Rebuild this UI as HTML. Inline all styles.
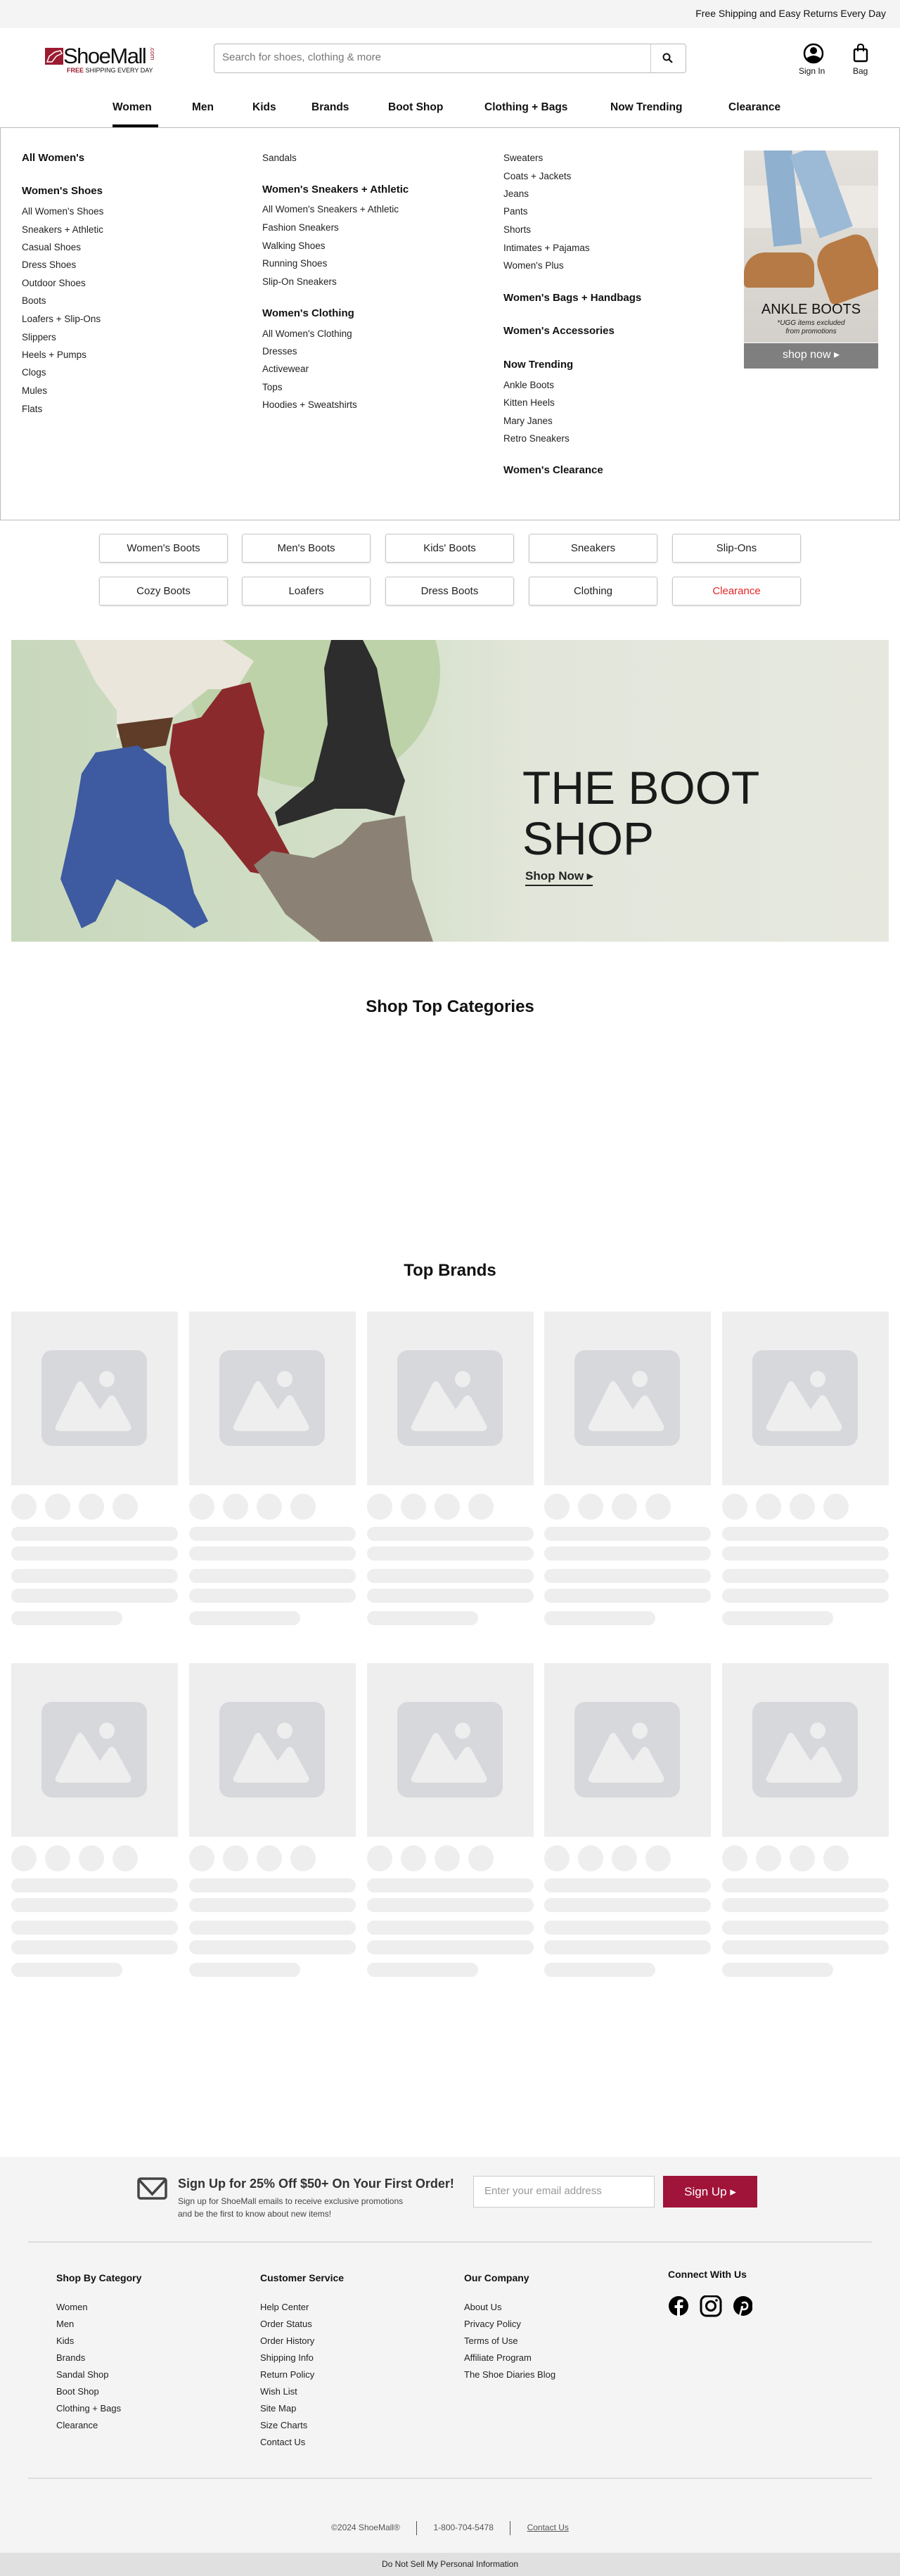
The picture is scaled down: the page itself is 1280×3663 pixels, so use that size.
<!DOCTYPE html>
<html><head><meta charset="utf-8">
<style>
*{margin:0;padding:0;box-sizing:border-box}
body{width:1280px;height:3663px;position:relative;background:#fff;font-family:"Liberation Sans",sans-serif;color:#111;overflow:hidden}
.a{position:absolute}
.mi{position:absolute;font-size:13.5px;color:#222;white-space:nowrap}
.mh{position:absolute;font-size:15px;font-weight:bold;color:#111;white-space:nowrap}
.nav{position:absolute;top:144px;font-size:15.5px;font-weight:bold;color:#111}
.btn{position:absolute;width:183px;height:41px;border:1px solid #c8c8c8;border-radius:3px;box-shadow:0 1px 2px rgba(0,0,0,.15);text-align:center;line-height:39px;font-size:15px;color:#222}
.card{position:absolute;width:237px}
.ci{height:247px;background:#eee;position:relative}
.ci svg{position:absolute;left:43px;top:55px}
.dots{position:absolute;top:259px;left:0}
.dots i{position:absolute;width:36px;height:37px;border-radius:50%;background:#eee}
.bar{position:absolute;left:0;height:20px;border-radius:10px;background:#eee}
.fh{position:absolute;font-size:14px;font-weight:bold;top:3231px;color:#111}
.fl{position:absolute;font-size:13px;color:#222;line-height:24px}
</style></head><body>

<div class="a" style="left:0;top:0;width:1280px;height:40px;background:#f4f4f4"></div>
<div class="a" style="right:20px;top:11px;font-size:14px;color:#111">Free Shipping and Easy Returns Every Day</div>

<div class="a" style="left:64px;top:68px;width:26px;height:24px;background:#9b1b30"></div>
<svg class="a" style="left:64px;top:68px" width="26" height="24" viewBox="0 0 26 24"><path d="M3 20 L6 12 L14 6 L22 4 L24 8 L16 12 L10 20 Z" fill="none" stroke="#fff" stroke-width="1.5"/></svg>
<div class="a" style="left:90px;top:62px;font-size:31px;letter-spacing:-1.5px;color:#111">ShoeMall</div>
<div class="a" style="left:212px;top:66px;font-size:9px;color:#9b1b30;writing-mode:vertical-rl">.com</div>
<div class="a" style="left:95px;top:95px;font-size:9px;color:#111;white-space:nowrap"><span style="color:#9b1b30;font-weight:bold">FREE</span> SHIPPING EVERY DAY</div>

<div class="a" style="left:304px;top:62px;width:672px;height:42px;border:1px solid #bbb;border-radius:4px"></div>
<div class="a" style="left:925px;top:63px;width:1px;height:40px;background:#ccc"></div>
<div class="a" style="left:316px;top:73px;font-size:15px;color:#777">Search for shoes, clothing &amp; more</div>
<svg class="a" style="left:941px;top:74px" width="18" height="18" viewBox="0 0 18 18"><circle cx="7" cy="7" r="4.5" fill="none" stroke="#111" stroke-width="2"/><path d="M10.5 10.5 L15 15" stroke="#111" stroke-width="2.2"/></svg>

<svg class="a" style="left:1142px;top:61px" width="30" height="30" viewBox="0 0 30 30"><circle cx="15" cy="15" r="13" fill="none" stroke="#000" stroke-width="2.5"/><circle cx="15" cy="11" r="5" fill="#000"/><path d="M5 22 Q15 14 25 22 Q20 28 15 28 Q10 28 5 22Z" fill="#000"/></svg>
<div class="a" style="left:1136px;top:94px;font-size:12px">Sign In</div>
<svg class="a" style="left:1212px;top:61px" width="24" height="28" viewBox="0 0 24 28"><rect x="3" y="9" width="18" height="17" rx="2" fill="none" stroke="#000" stroke-width="2.4"/><path d="M8 12 V6 Q8 2 12 2 Q16 2 16 6 V12" fill="none" stroke="#000" stroke-width="2"/></svg>
<div class="a" style="left:1213px;top:94px;font-size:12px">Bag</div>

<div class="nav" style="left:160px">Women</div>
<div class="nav" style="left:273px">Men</div>
<div class="nav" style="left:359px">Kids</div>
<div class="nav" style="left:443px">Brands</div>
<div class="nav" style="left:552px">Boot Shop</div>
<div class="nav" style="left:689px">Clothing + Bags</div>
<div class="nav" style="left:868px">Now Trending</div>
<div class="nav" style="left:1036px">Clearance</div>
<div class="a" style="left:160px;top:177px;width:65px;height:4px;background:#000"></div>

<div class="a" style="left:0;top:181px;width:1280px;height:559px;border:1px solid #bbb"></div>
<div class="mh" style="left:31px;top:216px">All Women's</div>
<div class="mh" style="left:31px;top:263px">Women's Shoes</div>
<div class="mi" style="left:31px;top:293px">All Women's Shoes</div>
<div class="mi" style="left:31px;top:319px">Sneakers + Athletic</div>
<div class="mi" style="left:31px;top:344px">Casual Shoes</div>
<div class="mi" style="left:31px;top:369px">Dress Shoes</div>
<div class="mi" style="left:31px;top:395px">Outdoor Shoes</div>
<div class="mi" style="left:31px;top:420px">Boots</div>
<div class="mi" style="left:31px;top:446px">Loafers + Slip-Ons</div>
<div class="mi" style="left:31px;top:472px">Slippers</div>
<div class="mi" style="left:31px;top:497px">Heels + Pumps</div>
<div class="mi" style="left:31px;top:522px">Clogs</div>
<div class="mi" style="left:31px;top:548px">Mules</div>
<div class="mi" style="left:31px;top:574px">Flats</div>

<div class="mi" style="left:373px;top:217px">Sandals</div>
<div class="mh" style="left:373px;top:261px">Women's Sneakers + Athletic</div>
<div class="mi" style="left:373px;top:290px">All Women's Sneakers + Athletic</div>
<div class="mi" style="left:373px;top:316px">Fashion Sneakers</div>
<div class="mi" style="left:373px;top:342px">Walking Shoes</div>
<div class="mi" style="left:373px;top:367px">Running Shoes</div>
<div class="mi" style="left:373px;top:393px">Slip-On Sneakers</div>
<div class="mh" style="left:373px;top:437px">Women's Clothing</div>
<div class="mi" style="left:373px;top:467px">All Women's Clothing</div>
<div class="mi" style="left:373px;top:492px">Dresses</div>
<div class="mi" style="left:373px;top:517px">Activewear</div>
<div class="mi" style="left:373px;top:543px">Tops</div>
<div class="mi" style="left:373px;top:568px">Hoodies + Sweatshirts</div>

<div class="mi" style="left:716px;top:217px">Sweaters</div>
<div class="mi" style="left:716px;top:243px">Coats + Jackets</div>
<div class="mi" style="left:716px;top:268px">Jeans</div>
<div class="mi" style="left:716px;top:293px">Pants</div>
<div class="mi" style="left:716px;top:319px">Shorts</div>
<div class="mi" style="left:716px;top:345px">Intimates + Pajamas</div>
<div class="mi" style="left:716px;top:370px">Women's Plus</div>
<div class="mh" style="left:716px;top:415px">Women's Bags + Handbags</div>
<div class="mh" style="left:716px;top:462px">Women's Accessories</div>
<div class="mh" style="left:716px;top:510px">Now Trending</div>
<div class="mi" style="left:716px;top:540px">Ankle Boots</div>
<div class="mi" style="left:716px;top:565px">Kitten Heels</div>
<div class="mi" style="left:716px;top:591px">Mary Janes</div>
<div class="mi" style="left:716px;top:616px">Retro Sneakers</div>
<div class="mh" style="left:716px;top:660px">Women's Clearance</div>

<div class="a" style="left:1058px;top:214px;width:191px;height:273px;background:linear-gradient(180deg,#e4e1dd 0%,#dcd8d2 55%,#d3d0cb 100%);overflow:hidden">
 <div class="a" style="left:0;top:50px;width:191px;height:60px;background:#ece9e5"></div>
 <div class="a" style="left:35px;top:-5px;width:40px;height:140px;background:#8fb0cf;transform:rotate(-6deg)"></div>
 <div class="a" style="left:85px;top:-5px;width:50px;height:125px;background:#9cbad6;transform:rotate(-20deg)"></div>
 <div class="a" style="left:0;top:145px;width:100px;height:50px;background:#b57a45;border-radius:30px 20px 6px 6px"></div>
 <div class="a" style="left:108px;top:125px;width:80px;height:85px;background:#b87a44;border-radius:30px 20px 8px 8px;transform:rotate(-20deg)"></div>
</div>
<div class="a" style="left:1058px;top:429px;width:191px;text-align:center;font-size:20px;color:#111">ANKLE BOOTS</div>
<div class="a" style="left:1058px;top:454px;width:191px;text-align:center;font-size:10px;font-style:italic;color:#222;line-height:12px">*UGG items excluded<br>from promotions</div>
<div class="a" style="left:1058px;top:488px;width:191px;height:36px;background:#7f7f7f;color:#fff;text-align:center;font-size:16px;line-height:34px">shop now ▸</div>

<div class="btn" style="left:141px;top:759px">Women's Boots</div>
<div class="btn" style="left:344px;top:759px">Men's Boots</div>
<div class="btn" style="left:548px;top:759px">Kids' Boots</div>
<div class="btn" style="left:752px;top:759px">Sneakers</div>
<div class="btn" style="left:956px;top:759px">Slip-Ons</div>
<div class="btn" style="left:141px;top:820px">Cozy Boots</div>
<div class="btn" style="left:344px;top:820px">Loafers</div>
<div class="btn" style="left:548px;top:820px">Dress Boots</div>
<div class="btn" style="left:752px;top:820px">Clothing</div>
<div class="btn" style="left:956px;top:820px;color:#e3262b">Clearance</div>

<div class="a" style="left:16px;top:910px;width:1248px;height:429px;background:linear-gradient(90deg,#c8d8bc 0%,#d3dfc8 40%,#e2e6da 60%,#e6e8df 100%);overflow:hidden">
 <div class="a" style="left:250px;top:-120px;width:360px;height:330px;border-radius:50%;background:#bdd2a8"></div>
 <svg class="a" style="left:0;top:0" width="620" height="429" viewBox="0 0 620 429">
  <path d="M90 0 L300 0 L345 30 L320 70 L280 70 L230 110 L150 140 L150 100 L120 60 Z" fill="#ebe6dc"/>
  <path d="M150 120 L230 110 L220 150 L160 160Z" fill="#5e3c28"/>
  <path d="M300 70 L340 60 L360 130 L350 220 L410 330 L395 340 L340 330 L300 280 L240 220 L225 160 L230 120 L270 110 Z" fill="#8b2a2c"/>
  <path d="M455 0 L500 0 L520 40 L540 150 L560 200 L545 250 L505 240 L460 240 L380 265 L375 245 L430 200 L450 120 L445 40 Z" fill="#2d2d2d"/>
  <path d="M120 160 L180 150 L220 180 L225 260 L245 300 L260 360 L280 400 L260 410 L220 380 L150 340 L120 400 L100 410 L70 340 L90 250 L100 190Z" fill="#3e5aa0"/>
  <path d="M500 260 L560 250 L570 340 L600 429 L440 429 L390 390 L345 320 L370 300 L430 310 L470 290 Z" fill="#8b8275"/>
 </svg>
 <div class="a" style="left:727px;top:174px;font-size:66px;line-height:72px;color:#1a1a1a;letter-spacing:0">THE BOOT<br>SHOP</div>
 <div class="a" style="left:731px;top:326px;font-size:17px;font-weight:bold;color:#222;border-bottom:2px solid #222;padding-bottom:2px">Shop Now ▸</div>
</div>

<div class="a" style="left:0;top:1418px;width:1280px;text-align:center;font-size:24px;font-weight:bold">Shop Top Categories</div>
<div class="a" style="left:0;top:1793px;width:1280px;text-align:center;font-size:24px;font-weight:bold">Top Brands</div>

<div id="cards"></div>

<div class="a" style="left:0;top:3067px;width:1280px;height:563px;background:#f4f4f4"></div>
<svg class="a" style="left:195px;top:3096px" width="43" height="32" viewBox="0 0 43 32"><rect x="2" y="2" width="39" height="28" rx="3" fill="none" stroke="#444" stroke-width="3.5"/><path d="M3 4 L21.5 24 L40 4" fill="none" stroke="#444" stroke-width="3.5"/></svg>
<div class="a" style="left:253px;top:3095px;font-size:18px;font-weight:bold;color:#333">Sign Up for 25% Off $50+ On Your First Order!</div>
<div class="a" style="left:253px;top:3121px;font-size:12px;color:#444;line-height:18px">Sign up for ShoeMall emails to receive exclusive promotions<br>and be the first to know about new items!</div>
<div class="a" style="left:673px;top:3094px;width:258px;height:45px;background:#fff;border:1px solid #ccc;font-size:15px;color:#999;padding:12px 15px">Enter your email address</div>
<div class="a" style="left:943px;top:3094px;width:134px;height:45px;background:#a0143a;color:#fff;font-size:17px;text-align:center;line-height:45px">Sign Up ▸</div>
<div class="a" style="left:40px;top:3187px;width:1200px;height:2px;background:#ddd"></div>

<div class="fh" style="left:80px">Shop By Category</div>
<div class="fh" style="left:370px">Customer Service</div>
<div class="fh" style="left:660px">Our Company</div>
<div class="fh" style="left:950px;top:3226px">Connect With Us</div>
<div class="fl" style="left:80px;top:3269px">Women<br>Men<br>Kids<br>Brands<br>Sandal Shop<br>Boot Shop<br>Clothing + Bags<br>Clearance</div>
<div class="fl" style="left:370px;top:3269px">Help Center<br>Order Status<br>Order History<br>Shipping Info<br>Return Policy<br>Wish List<br>Site Map<br>Size Charts<br>Contact Us</div>
<div class="fl" style="left:660px;top:3269px">About Us<br>Privacy Policy<br>Terms of Use<br>Affiliate Program<br>The Shoe Diaries Blog</div>
<svg class="a" style="left:950px;top:3264px" width="120" height="31" viewBox="0 0 120 31">
 <circle cx="15" cy="15" r="14" fill="#000"/><path d="M17 30 V18 H21 L21.5 14 H17 V11.5 Q17 9.5 19 9.5 H21.5 V6 Q20 5.8 18 5.8 Q13 5.8 13 11 V14 H9.5 V18 H13 V30Z" fill="#fff"/>
 <rect x="47" y="1" width="28" height="28" rx="8" fill="none" stroke="#000" stroke-width="3"/><circle cx="61" cy="15" r="6.5" fill="none" stroke="#000" stroke-width="3"/><circle cx="69" cy="7" r="1.8" fill="#000"/>
 <circle cx="107" cy="15" r="14" fill="#000"/><path d="M105 11 Q111 8 113 13 Q114 20 107 20 Q104 19 105 16 M106 15 L102 29" fill="none" stroke="#fff" stroke-width="2.5"/>
</svg>
<div class="a" style="left:40px;top:3523px;width:1200px;height:2px;background:#ddd"></div>
<div class="a" style="left:0;top:3585px;width:1280px;text-align:center;font-size:12px;color:#555">©2024 ShoeMall® <span style="display:inline-block;width:1px;height:20px;background:#555;vertical-align:middle;margin:0 20px"></span> 1-800-704-5478 <span style="display:inline-block;width:1px;height:20px;background:#555;vertical-align:middle;margin:0 20px"></span> <u>Contact Us</u></div>
<div class="a" style="left:0;top:3630px;width:1280px;height:33px;background:#e0e0e0;text-align:center;font-size:12px;line-height:33px;color:#222">Do Not Sell My Personal Information</div>

<script>
var h='',xs=[16,269,522,774,1027],ys=[1865,2365];
var icon='<svg width="150" height="136" viewBox="0 0 150 136"><rect width="150" height="136" rx="15" fill="#d7d8dc"/><ellipse cx="93" cy="41" rx="11" ry="11.5" fill="#eee"/><path d="M20 108 L50 48 Q55 40 60 48 L83 84 L95 67 Q100 61 105 67 L127 107 Q129 114 122 115 L27 115 Q18 114 20 108Z" fill="#eee"/></svg>';
ys.forEach(function(y){xs.forEach(function(x){
h+='<div class="card" style="left:'+x+'px;top:'+y+'px"><div class="ci">'+icon+'</div><div class="dots"><i style="left:0"></i><i style="left:48px"></i><i style="left:96px"></i><i style="left:144px"></i></div>'+
'<div class="bar" style="top:306px;width:237px"></div><div class="bar" style="top:334px;width:237px"></div><div class="bar" style="top:366px;width:237px"></div><div class="bar" style="top:394px;width:237px"></div><div class="bar" style="top:426px;width:158px"></div></div>';
});});
document.getElementById('cards').innerHTML=h;
</script>
</body></html>
